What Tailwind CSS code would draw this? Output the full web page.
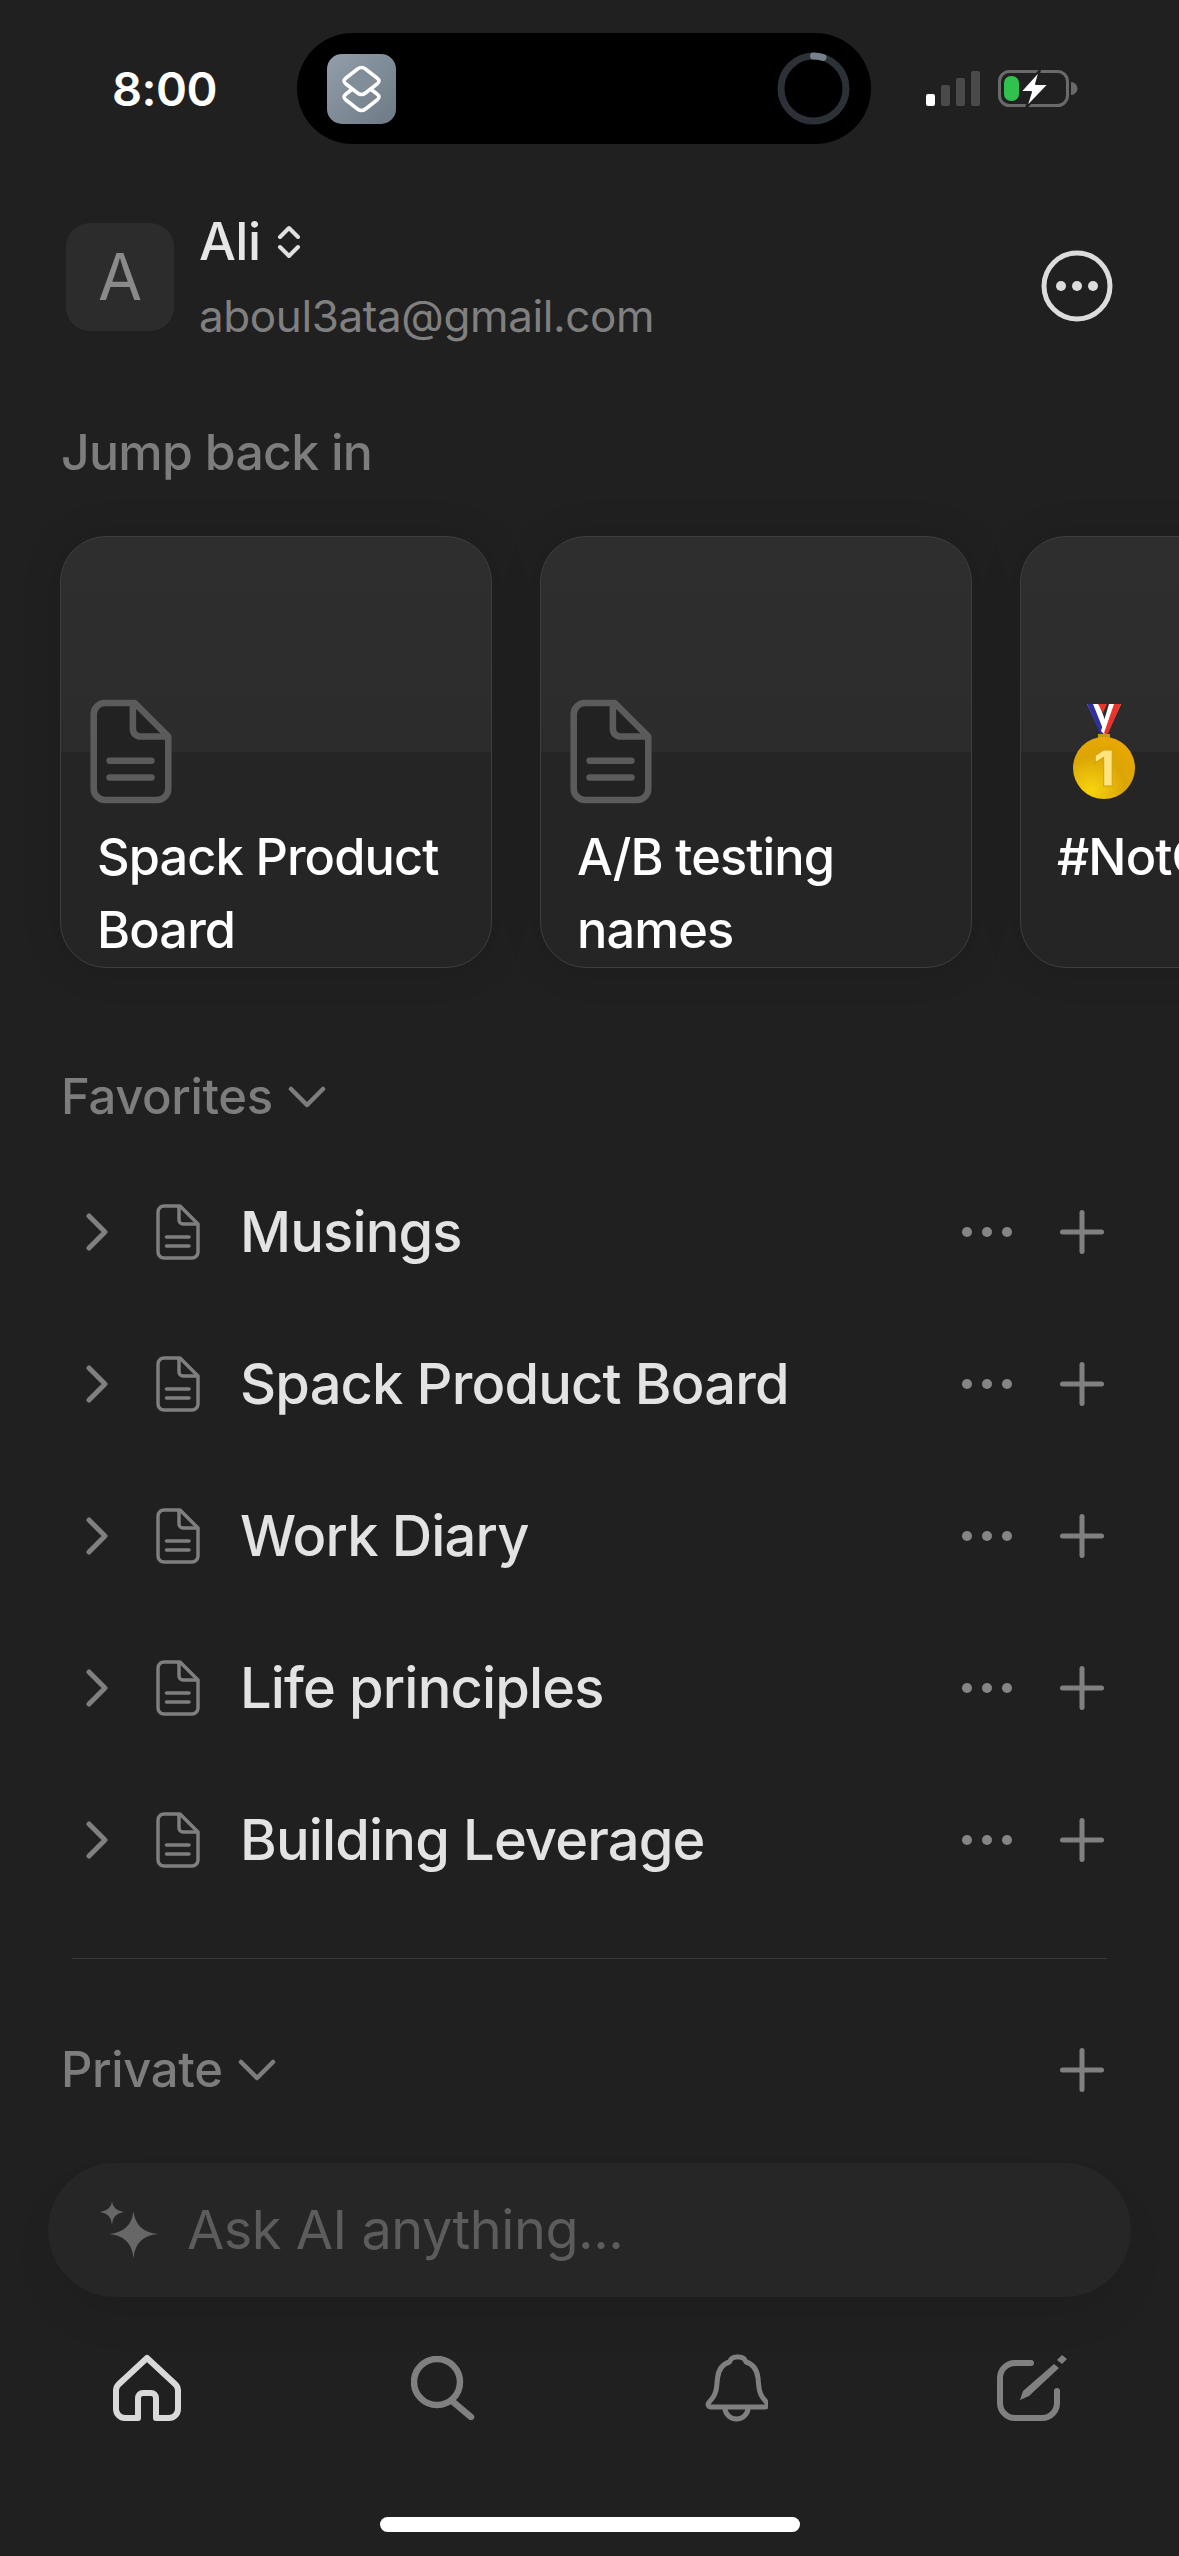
<!DOCTYPE html>
<html lang="en">
<head>
<meta charset="UTF-8">
<meta name="viewport" content="width=device-width, initial-scale=1.0">
<title>Home</title>
<script src="https://cdn.jsdelivr.net/npm/@tailwindcss/browser@4"></script>
</head>
<body class="bg-[#202020] font-[Inter,sans-serif] antialiased">

<!-- shared icons -->
<svg class="hidden">
  <symbol id="doc" viewBox="0 0 44 56">
    <path stroke-linejoin="round" d="M8 2H24L42 20V48a6 6 0 0 1-6 6H8a6 6 0 0 1-6-6V8a6 6 0 0 1 6-6Z"/>
    <path fill="none" d="M23 2V16a4 4 0 0 0 4 4H42"/>
    <path fill="none" stroke-linecap="round" d="M10.500 33H33M10.500 42H33"/>
  </symbol>
  <symbol id="right" viewBox="0 0 22 38">
    <path fill="none" stroke-linecap="round" stroke-linejoin="round" d="M3 3L19 19L3 35"/>
  </symbol>
  <symbol id="down" viewBox="0 0 38 22">
    <path fill="none" stroke-linecap="round" stroke-linejoin="round" d="M3 3L19 19L35 3"/>
  </symbol>
  <symbol id="plus" viewBox="0 0 44 44">
    <path fill="none" stroke-linecap="round" d="M22 2.500V41.500M2.500 22H41.500"/>
  </symbol>
</svg>

<main class="w-[1179px] h-[2556px] overflow-hidden flex flex-col">

  <!-- status bar -->
  <div class="h-[144px] pt-[33px] pl-[112px] flex items-center shrink-0">
    <div class="w-[185px] text-[47px] leading-[60px] font-semibold text-white tracking-[-0.5px]">8:00</div>
    <div class="w-[574px] h-[111px] rounded-full bg-black flex items-center justify-between pl-[30px] pr-[21px]">
      <svg width="69" height="70" viewBox="0 0 69 70">
        <defs><linearGradient id="sc" x1="0" y1="0" x2="1" y2="1"><stop offset="0" stop-color="#929eaa"/><stop offset="1" stop-color="#6d7985"/></linearGradient></defs>
        <rect width="69" height="70" rx="15" fill="url(#sc)"/>
        <path d="M30.500 31Q34.500 28 38.500 31L50 40Q54 43 50 46L38.500 55Q34.500 58 30.500 55L19 46Q15 43 19 40Z" fill="none" stroke="#fff" stroke-width="3.500"/>
        <path d="M30.500 15Q34.500 12 38.500 15L50 24Q54 27 50 30L38.500 39Q34.500 42 30.500 39L19 30Q15 27 19 24Z" fill="#818d99" stroke="#fff" stroke-width="3.500"/>
      </svg>
      <svg width="73" height="73" viewBox="0 0 73 73">
        <circle cx="36.500" cy="36.500" r="32.500" fill="none" stroke="#2c3137" stroke-width="7"/>
        <path d="M36.500 4A32.500 32.500 0 0 1 46 5.500" fill="none" stroke="#76818c" stroke-width="7" stroke-linecap="round"/>
      </svg>
    </div>
    <div class="ml-[55px] flex items-end gap-[6px] h-[35px] mt-[-1px]">
      <div class="w-[9px] h-[12px] rounded-[2px] bg-white"></div>
      <div class="w-[9px] h-[21px] rounded-[2px] bg-[#4a4a4a]"></div>
      <div class="w-[9px] h-[28px] rounded-[2px] bg-[#4a4a4a]"></div>
      <div class="w-[9px] h-[35px] rounded-[2px] bg-[#4a4a4a]"></div>
    </div>
    <svg class="ml-[18px]" width="80" height="38" viewBox="0 0 80 38">
      <rect x="1.500" y="1.500" width="68" height="34" rx="10" fill="none" stroke="#6a6a6a" stroke-width="3"/>
      <rect x="6" y="6" width="15" height="25" rx="7" fill="#30c24f"/>
      <path d="M73 12a6 6 0 0 1 0 13Z" fill="#6a6a6a"/>
      <path d="M42 0L22 22H33L28 38L51 14H38Z" fill="#fff" stroke="#202020" stroke-width="2" stroke-linejoin="round"/>
    </svg>
  </div>

  <!-- account header -->
  <div class="mt-[68px] pl-[66px] pr-[66px] flex items-start shrink-0">
    <div class="mt-[11px] w-[108px] h-[108px] rounded-[24px] bg-[#2c2c2c] flex items-center justify-center text-[64px] leading-none text-[#8a8a8a]">A</div>
    <div class="ml-[25px] flex-1">
      <div class="h-[60px] flex items-center gap-[16px] text-[52px] leading-[60px] font-medium tracking-[-0.5px] text-[#e6e6e6]">
        Ali
        <svg width="24" height="34" viewBox="0 0 24 34" fill="none" stroke="#e0e0e0" stroke-width="4" stroke-linecap="round" stroke-linejoin="round"><path d="M3 12L12 3L21 12M3 22L12 31L21 22"/></svg>
      </div>
      <div class="mt-[16px] text-[44px] leading-[56px] tracking-[-0.4px] text-[#808080]">aboul3ata@gmail.com</div>
    </div>
    <svg class="mt-[38px]" width="72" height="72" viewBox="0 0 72 72">
      <circle cx="36" cy="36" r="33" fill="none" stroke="#dcdcdc" stroke-width="5"/>
      <circle cx="20" cy="36" r="5" fill="#dcdcdc"/><circle cx="36" cy="36" r="5" fill="#dcdcdc"/><circle cx="52" cy="36" r="5" fill="#dcdcdc"/>
    </svg>
  </div>

  <!-- jump back in -->
  <div class="mt-[78px] pl-[61px] text-[50px] leading-[60px] tracking-[-0.75px] font-[450] text-[#7d7d7d] shrink-0">Jump back in</div>
  <div class="mt-[54px] pl-[60px] flex gap-[48px] shrink-0">
    <div class="w-[432px] h-[432px] shrink-0 rounded-[46px] border border-[#3e3e3e] bg-[linear-gradient(#2e2e2e_0,#2c2c2c_50%,#252525_50%)] shadow-[0_0_40px_rgba(0,0,0,0.12)] pl-[29px] pt-[162px]">
      <svg class="w-[82px] h-[105px] fill-[#222222] stroke-[#5b5b5b] stroke-[3.500px]"><use href="#doc"/></svg>
      <div class="mt-[16px] pl-[7px] text-[50.500px] leading-[73px] tracking-[-0.9px] font-medium text-white">Spack Product Board</div>
    </div>
    <div class="w-[432px] h-[432px] shrink-0 rounded-[46px] border border-[#3e3e3e] bg-[linear-gradient(#2e2e2e_0,#2c2c2c_50%,#252525_50%)] shadow-[0_0_40px_rgba(0,0,0,0.12)] pl-[29px] pt-[162px]">
      <svg class="w-[82px] h-[105px] fill-[#222222] stroke-[#5b5b5b] stroke-[3.500px]"><use href="#doc"/></svg>
      <div class="mt-[16px] pl-[7px] text-[50.500px] leading-[73px] tracking-[-0.9px] font-medium text-white">A/B testing names</div>
    </div>
    <div class="w-[432px] h-[432px] shrink-0 rounded-[46px] border border-[#3e3e3e] bg-[linear-gradient(#2e2e2e_0,#2c2c2c_50%,#252525_50%)] shadow-[0_0_40px_rgba(0,0,0,0.12)] pl-[51px] pt-[167px]">
      <svg width="64" height="95" viewBox="0 0 64 95">
        <defs>
          <radialGradient id="gold" cx="0.3" cy="0.85" r="0.9"><stop offset="0" stop-color="#f7d40e"/><stop offset="0.6" stop-color="#dba506"/><stop offset="1" stop-color="#eaa800"/></radialGradient>
        </defs>
        <path d="M15 0H27L36 24L30 32Z" fill="#fff"/>
        <path d="M15 0H21L33 30L29 32Z" fill="#2f2f9e"/>
        <path d="M26 0H35L31 9Z" fill="#e8342a"/>
        <path d="M37 0H49L34 32L29 27Z" fill="#fff"/>
        <path d="M42 0H49L35 32L32 29Z" fill="#e8342a"/>
        <rect x="26" y="30" width="12" height="5" fill="#c99a14"/>
        <circle cx="32" cy="64" r="31" fill="url(#gold)"/>
        <text x="32" y="82" text-anchor="middle" font-family="Inter" font-weight="800" font-size="50" fill="#fde47f" stroke="#d69f0c" stroke-width="1">1</text>
      </svg>
      <div class="mt-[21px] w-[380px] whitespace-nowrap text-[50.500px] leading-[73px] tracking-[-0.9px] font-medium text-white -ml-[15px]">#NotCommon</div>
    </div>
  </div>

  <!-- favorites -->
  <div class="mt-[99px] pl-[61px] h-[60px] flex items-center gap-[15px] text-[49px] leading-[60px] tracking-[-0.35px] font-[450] text-[#7d7d7d] shrink-0">
    Favorites
    <svg class="w-[38px] h-[22px] stroke-[#7d7d7d] stroke-[4.500px]"><use href="#down"/></svg>
  </div>
  <div class="mt-[29px] shrink-0">
    <div class="h-[152px] pl-[86px] pr-[75px] flex items-center">
      <svg class="w-[22px] h-[38px] stroke-[#7f7f7f] stroke-[5px]"><use href="#right"/></svg>
      <svg class="ml-[48px] w-[44px] h-[56px] fill-none stroke-[#7f7f7f] stroke-[3.500px]"><use href="#doc"/></svg>
      <div class="ml-[40px] flex-1 text-[56px] leading-[70px] tracking-[-0.85px] font-[450] text-[#e3e3e3]">Musings</div>
      <div class="flex gap-[10px]"><i class="size-[10px] rounded-full bg-[#858585]"></i><i class="size-[10px] rounded-full bg-[#858585]"></i><i class="size-[10px] rounded-full bg-[#858585]"></i></div>
      <svg class="ml-[48px] w-[44px] h-[44px] stroke-[#808080] stroke-[5px]"><use href="#plus"/></svg>
    </div>
    <div class="h-[152px] pl-[86px] pr-[75px] flex items-center">
      <svg class="w-[22px] h-[38px] stroke-[#7f7f7f] stroke-[5px]"><use href="#right"/></svg>
      <svg class="ml-[48px] w-[44px] h-[56px] fill-none stroke-[#7f7f7f] stroke-[3.500px]"><use href="#doc"/></svg>
      <div class="ml-[40px] flex-1 text-[56px] leading-[70px] tracking-[-0.85px] font-[450] text-[#e3e3e3]">Spack Product Board</div>
      <div class="flex gap-[10px]"><i class="size-[10px] rounded-full bg-[#858585]"></i><i class="size-[10px] rounded-full bg-[#858585]"></i><i class="size-[10px] rounded-full bg-[#858585]"></i></div>
      <svg class="ml-[48px] w-[44px] h-[44px] stroke-[#808080] stroke-[5px]"><use href="#plus"/></svg>
    </div>
    <div class="h-[152px] pl-[86px] pr-[75px] flex items-center">
      <svg class="w-[22px] h-[38px] stroke-[#7f7f7f] stroke-[5px]"><use href="#right"/></svg>
      <svg class="ml-[48px] w-[44px] h-[56px] fill-none stroke-[#7f7f7f] stroke-[3.500px]"><use href="#doc"/></svg>
      <div class="ml-[40px] flex-1 text-[56px] leading-[70px] tracking-[-0.85px] font-[450] text-[#e3e3e3]">Work Diary</div>
      <div class="flex gap-[10px]"><i class="size-[10px] rounded-full bg-[#858585]"></i><i class="size-[10px] rounded-full bg-[#858585]"></i><i class="size-[10px] rounded-full bg-[#858585]"></i></div>
      <svg class="ml-[48px] w-[44px] h-[44px] stroke-[#808080] stroke-[5px]"><use href="#plus"/></svg>
    </div>
    <div class="h-[152px] pl-[86px] pr-[75px] flex items-center">
      <svg class="w-[22px] h-[38px] stroke-[#7f7f7f] stroke-[5px]"><use href="#right"/></svg>
      <svg class="ml-[48px] w-[44px] h-[56px] fill-none stroke-[#7f7f7f] stroke-[3.500px]"><use href="#doc"/></svg>
      <div class="ml-[40px] flex-1 text-[56px] leading-[70px] tracking-[-0.85px] font-[450] text-[#e3e3e3]">Life principles</div>
      <div class="flex gap-[10px]"><i class="size-[10px] rounded-full bg-[#858585]"></i><i class="size-[10px] rounded-full bg-[#858585]"></i><i class="size-[10px] rounded-full bg-[#858585]"></i></div>
      <svg class="ml-[48px] w-[44px] h-[44px] stroke-[#808080] stroke-[5px]"><use href="#plus"/></svg>
    </div>
    <div class="h-[152px] pl-[86px] pr-[75px] flex items-center">
      <svg class="w-[22px] h-[38px] stroke-[#7f7f7f] stroke-[5px]"><use href="#right"/></svg>
      <svg class="ml-[48px] w-[44px] h-[56px] fill-none stroke-[#7f7f7f] stroke-[3.500px]"><use href="#doc"/></svg>
      <div class="ml-[40px] flex-1 text-[56px] leading-[70px] tracking-[-0.85px] font-[450] text-[#e3e3e3]">Building Leverage</div>
      <div class="flex gap-[10px]"><i class="size-[10px] rounded-full bg-[#858585]"></i><i class="size-[10px] rounded-full bg-[#858585]"></i><i class="size-[10px] rounded-full bg-[#858585]"></i></div>
      <svg class="ml-[48px] w-[44px] h-[44px] stroke-[#808080] stroke-[5px]"><use href="#plus"/></svg>
    </div>
  </div>

  <div class="mt-[42px] mx-[72px] h-px bg-[#3a3a3a] shrink-0"></div>

  <!-- private -->
  <div class="mt-[81px] pl-[61px] pr-[75px] h-[60px] flex items-center text-[49px] leading-[60px] tracking-[-0.35px] font-[450] text-[#7d7d7d] shrink-0">
    Private
    <svg class="ml-[15px] w-[38px] h-[22px] stroke-[#7d7d7d] stroke-[4.500px]"><use href="#down"/></svg>
    <svg class="ml-auto w-[44px] h-[44px] stroke-[#808080] stroke-[5px]"><use href="#plus"/></svg>
  </div>

  <!-- ask ai -->
  <div class="mt-[63px] mx-[48px] h-[134px] rounded-full bg-[#262626] shadow-[0_24px_40px_rgba(0,0,0,0.06)] pl-[52px] flex items-center shrink-0">
    <svg width="58" height="58" viewBox="0 0 58 58" fill="#676767">
      <path d="M33.500 10C35 24 43 31.500 58 33C43 34.500 35 42 33.500 57C32 42 24 34.500 9 33C24 31.500 32 24 33.500 10Z"/>
      <path d="M12 0C12.800 6 16 9.500 24 11C16 12.500 12.800 16 12 24C11.200 16 8 12.500 0 11C8 9.500 11.200 6 12 0Z"/>
    </svg>
    <div class="ml-[29px] text-[54px] leading-[70px] tracking-[-0.45px] text-[#5c5c5c]">Ask AI anything...</div>
  </div>

  <!-- bottom nav -->
  <div class="mt-[57px] px-[112px] flex items-center justify-between shrink-0">
    <svg width="70" height="68" viewBox="0 0 70 68" fill="none" stroke="#d9d9d9" stroke-width="6" stroke-linejoin="round">
      <path d="M35 4L63 30a9 9 0 0 1 3 6V55a9 9 0 0 1-9 9H44V44a5 5 0 0 0-5-5H31a5 5 0 0 0-5 5V64H13a9 9 0 0 1-9-9V36a9 9 0 0 1 3-6Z"/>
    </svg>
    <svg width="64" height="64" viewBox="0 0 64 64" fill="none" stroke="#808080" stroke-width="6.500" stroke-linecap="round">
      <circle cx="26" cy="26" r="23"/><path d="M41 45L60 61"/>
    </svg>
    <svg width="63" height="68" viewBox="0 0 63 68" fill="none" stroke="#808080" stroke-width="5" stroke-linejoin="round">
      <path d="M31.500 3c-4 0-6 2-7 5c-7 2-11 8-12 16c-1 10-1 15-5 20l-4 5c-1 2 0 4 2 4H60c2 0 3-2 2-4l-4-5c-4-5-4-10-5-20c-1-8-5-14-12-16c-1-3-3-5-7-5Z"/>
      <path d="M20 54a11.500 11 0 0 0 23 0"/>
    </svg>
    <svg width="70" height="66" viewBox="0 0 70 66" fill="none" stroke="#808080" stroke-width="6" stroke-linecap="round">
      <path d="M34 8H18A15 15 0 0 0 3 23V48A15 15 0 0 0 18 63H45A15 15 0 0 0 60 48V36"/>
      <path d="M23 45L26 36L57 9L62 13L32 41Z" fill="#808080" stroke="none"/>
      <path d="M60 5L65 0L70 4L65 9Z" fill="#808080" stroke="none"/>
    </svg>
  </div>

  <div class="mt-[95px] mx-auto w-[420px] h-[15px] rounded-full bg-white shrink-0"></div>
</main>
</body>
</html>
